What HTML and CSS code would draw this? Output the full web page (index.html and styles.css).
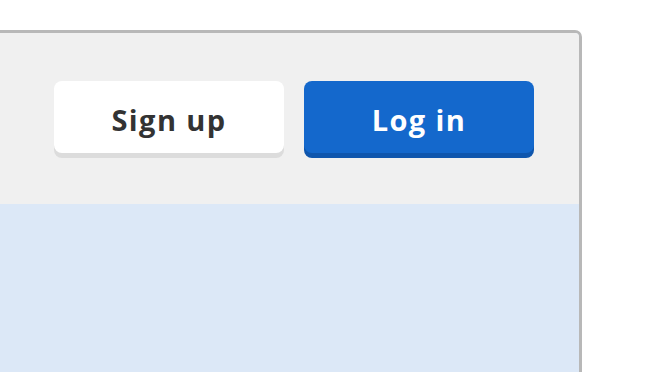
FILE: index.html
```html
<!DOCTYPE html>
<html>
<head>
<meta charset="utf-8">
<link rel="stylesheet" href="styles.css">
</head>
<body>
<div class="frame">
  <div class="panel">
    <div class="header">
      <button class="btn btn-signup">Sign up</button>
      <button class="btn btn-login">Log in</button>
    </div>
    <div class="content"></div>
  </div>
</div>
</body>
</html>
```
FILE: styles.css
```css
html, body {
  margin: 0;
  padding: 0;
  background: #ffffff;
  overflow: hidden;
}
.frame {
  padding-top: 30px;
  height: 372px;
  box-sizing: border-box;
}
.panel {
  margin-left: -20px;
  width: 602px;
  height: 360px;
  box-sizing: border-box;
  border: 3px solid #b8b8b8;
  border-radius: 7px 7px 0 0;
  background: #dce8f7;
  overflow: hidden;
  display: flex;
  flex-direction: column;
}
.header {
  background: #f0f0f0;
  height: 171px;
  box-sizing: border-box;
  padding: 48px 45px 0 0;
  display: flex;
  justify-content: flex-end;
  align-items: flex-start;
  gap: 20px;
}
.btn {
  width: 230px;
  height: 72px;
  border: none;
  border-radius: 8px;
  font-family: "Open Sans", "DejaVu Sans", sans-serif;
  font-weight: 700;
  font-size: 29px;
  letter-spacing: 1.4px;
  cursor: pointer;
  padding: 4px 0 0 0;
}
.btn-signup {
  background: #ffffff;
  color: #333333;
  box-shadow: 0 5px 0 #dcdcdc;
}
.btn-login {
  background: #1468cc;
  color: #ffffff;
  box-shadow: 0 5px 0 #0f56ad;
}
.content {
  flex: 1;
  background: #dce8f7;
}
```
